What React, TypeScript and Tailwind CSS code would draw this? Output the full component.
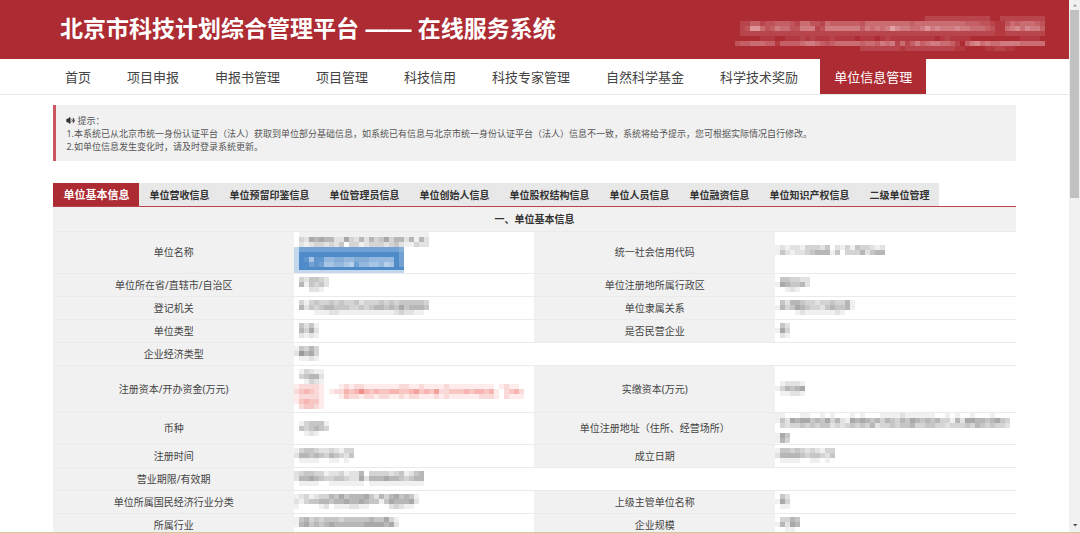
import { Volume2 } from "lucide-react";
import clsx from "clsx";

const CELL = 5;

const navItems = [
  "首页",
  "项目申报",
  "申报书管理",
  "项目管理",
  "科技信用",
  "科技专家管理",
  "自然科学基金",
  "科学技术奖励",
  "单位信息管理",
];

const tabs = [
  "单位基本信息",
  "单位营收信息",
  "单位预留印鉴信息",
  "单位管理员信息",
  "单位创始人信息",
  "单位股权结构信息",
  "单位人员信息",
  "单位融资信息",
  "单位知识产权信息",
  "二级单位管理",
];

type Field = { label: string; rows: string[] };
type Row = { height: string; left: Field; right?: Field };

// Each digit is the strength of one masked block, 0 is empty.
const rows: Row[] = [
  {
    height: "h-[42px]",
    left: {
      label: "单位名称",
      rows: [
        "011111111111111111111111111",
        "032656552263252534635525152",
        "021233232403312333234211322",
      ],
    },
    right: {
      label: "统一社会信用代码",
      rows: ["1212213332402131433212", "1421223455514033352455", "0000000000000000000000"],
    },
  },
  {
    height: "h-[23px]",
    left: { label: "单位所在省/直辖市/自治区", rows: ["0324432", "0514342", "0002210"] },
    right: { label: "单位注册地所属行政区", rows: ["0443322", "1654452", "0012100"] },
  },
  {
    height: "h-[23px]",
    left: {
      label: "登记机关",
      rows: [
        "031343343433423334343444443",
        "052434554443343455454645554",
        "000011122111111111112322110",
      ],
    },
    right: {
      label: "单位隶属关系",
      rows: ["0425543323343351", "1534654332454451", "0000121111112100"],
    },
  },
  {
    height: "h-[23px]",
    left: { label: "单位类型", rows: ["04241", "05362", "02121"] },
    right: { label: "是否民营企业", rows: ["042", "163", "021"] },
  },
  {
    height: "h-[23px]",
    left: { label: "企业经济类型", rows: ["14353", "27563", "01121"] },
  },
  {
    height: "h-[47px]",
    left: { label: "注册资本/开办资金(万元)", rows: ["013211", "034552", "001321"] },
    right: { label: "实缴资本(万元)", rows: ["012221", "135456", "011221"] },
  },
  {
    height: "h-[32px]",
    left: { label: "币种", rows: ["0134441", "0434543", "0012100"] },
    right: {
      label: "单位注册地址（住所、经营场所）",
      rows: [
        "11000110010100010100011112111111001010010001000",
        "14265664546352165654535435465454533152665545643",
        "03233434344232343435233434453344332333435434332",
        "00000000000000000000000000000000000000000000000",
        "16400000000000000000000000000000000000000000000",
        "15300000000000000000000000000000000000000000000",
      ],
    },
  },
  {
    height: "h-[23px]",
    left: { label: "注册时间", rows: ["134432232133", "255454354324", "011110011010"] },
    right: { label: "成立日期", rows: ["144343232133", "255554344324", "011110011010"] },
  },
  {
    height: "h-[23px]",
    left: {
      label: "营业期限/有效期",
      rows: ["23443312231225033332341245", "25565433443226255565543455", "01111001111111011111111111"],
    },
  },
  {
    height: "h-[23px]",
    left: {
      label: "单位所属国民经济行业分类",
      rows: ["1231233546455564253564541", "2134455455655654414655562", "1000012011122110000232110"],
    },
    right: { label: "上级主管单位名称", rows: ["042", "163", "011"] },
  },
  {
    height: "h-[23px]",
    left: {
      label: "所属行业",
      rows: ["145343444344444544631", "156454565555556666562", "000000000000000000000"],
    },
    right: { label: "企业规模", rows: ["03354", "15265", "00110"] },
  },
];

const capitalNotice = [
  "1222210001212211111112211211112111111111012110",
  "2343210122434643433443345343522333434434102342",
  "1222210001322122122112122111212111111222102111",
  "1343310000000000000000000000000000000000000000",
  "0233210000000000000000000000000000000000000000",
];

const maskedName = [
  "222222222222222222223",
  "000000000000000000002",
  "015114433443334444402",
  "002125544562445546502",
];

const userInfo = [
  "00000000000000000000000000000000000000222222222222200222222222",
  "02244233444325533254444443555555555455555555554443321135455543",
  "02388534655336662366666664656569766556867666766555431156757664",
  "02222222222222222222222222222222222222222222222222221122222222",
  "00000111001112121112111101110121111111110121111000000000011110",
  "34455544144445665434555554554656252464566554204675655666655555",
  "00000000000000000000000002222222212222222222110000112211000000",
];

function Mosaic({ rows, color = "#707070" }: { rows: string[]; color?: string }) {
  const width = rows[0].length * CELL;
  const height = rows.length * CELL;

  return (
    <svg
      className="block shrink-0"
      width={width}
      height={height}
      viewBox={`0 0 ${width} ${height}`}
      fill={color}
      shapeRendering="crispEdges"
      aria-hidden="true"
    >
      {rows.map((row, y) =>
        row.split("").map((level, x) =>
          level === "0" ? null : (
            <rect
              key={`${x}-${y}`}
              x={x * CELL}
              y={y * CELL}
              width={CELL}
              height={CELL}
              opacity={Number(level) / 10}
            />
          ),
        ),
      )}
    </svg>
  );
}

function Header() {
  return (
    <header className="flex h-[59px] items-center justify-between bg-[#ad2b33] pr-6 pl-[60px]">
      <h1 className="font-['Liberation_Sans','Noto_Sans_CJK_SC',sans-serif] text-[23px] font-bold whitespace-nowrap text-white">
        北京市科技计划综合管理平台 —— 在线服务系统
      </h1>
      <div className="pt-2">
        <Mosaic rows={userInfo} color="#e8b0b4" />
      </div>
    </header>
  );
}

function Nav() {
  return (
    <nav className="flex h-9 gap-2 border-b border-[#e8e8e8] px-[51px]">
      {navItems.map((item) => (
        <a
          key={item}
          href="#"
          className={clsx(
            "flex items-center px-3.5 pt-0.5 text-[13px] whitespace-nowrap",
            item === "单位信息管理" ? "bg-[#ad2b33] text-white" : "text-[#444]",
          )}
        >
          {item}
        </a>
      ))}
    </nav>
  );
}

function Notice() {
  return (
    <section className="mt-2.5 border-l-3 border-[#cb5761] bg-[#f1f1f1] pt-[9px] pb-2 pl-2.5 text-[9px] leading-[13px] text-[#555]">
      <p className="flex items-center gap-0.5">
        <Volume2 className="size-[9px] fill-[#333] text-[#333]" strokeWidth={2} />
        提示：
      </p>
      <p>
        1.本系统已从北京市统一身份认证平台（法人）获取到单位部分基础信息，如系统已有信息与北京市统一身份认证平台（法人）信息不一致，系统将给予提示，您可根据实际情况自行修改。
      </p>
      <p>2.如单位信息发生变化时，请及时登录系统更新。</p>
    </section>
  );
}

function Tabs() {
  return (
    <div role="tablist" className="mt-[22px] flex h-6 border-b border-[#b8434b]">
      {tabs.map((tab, i) => (
        <button
          key={tab}
          type="button"
          role="tab"
          aria-selected={i === 0}
          className={clsx(
            "px-2.5 pt-0.5 font-bold whitespace-nowrap",
            i === 0 ? "bg-[#ad2b33] text-[11px] text-white" : "bg-[#e8e8e8] text-[10px] text-[#333]",
          )}
        >
          {tab}
        </button>
      ))}
    </div>
  );
}

function Value({ field }: { field: Field }) {
  if (field.label === "单位名称") {
    return (
      <>
        <Mosaic rows={field.rows} />
        <button
          type="button"
          aria-label="单位名称"
          className="flex h-[26px] items-start border-b-3 border-l-5 border-[#c3d8ed] bg-[#4f8bc8]"
        >
          <Mosaic color="#ffffff" rows={maskedName} />
        </button>
      </>
    );
  }

  return (
    <>
      <Mosaic rows={field.rows} />
      {field.label.startsWith("注册资本") && <Mosaic rows={capitalNotice} color="#e8453c" />}
    </>
  );
}

function InfoTable() {
  return (
    <table className="w-full table-fixed border-collapse text-[10px] leading-3 text-[#444]">
      <thead>
        <tr className="h-6 border-b border-[#ebebeb] bg-[#f1f1f1]">
          <th colSpan={4} className="p-0 font-bold text-[#333]">
            一、单位基本信息
          </th>
        </tr>
      </thead>
      <tbody>
        {rows.map(({ height, left, right }) => (
          <tr key={left.label} className={clsx("border-b border-[#ebebeb]", height)}>
            <th scope="row" className="bg-[#f1f1f1] p-0 font-normal">
              {left.label}
            </th>
            <td colSpan={right ? 1 : 3} className="p-0">
              <Value field={left} />
            </td>
            {right && (
              <>
                <th scope="row" className="bg-[#f1f1f1] p-0 font-normal">
                  {right.label}
                </th>
                <td className="p-0">
                  <Value field={right} />
                </td>
              </>
            )}
          </tr>
        ))}
      </tbody>
    </table>
  );
}

function Scrollbar() {
  return (
    <div className="flex w-[11px] shrink-0 flex-col items-center bg-[#f1f1f1]">
      <svg className="h-2.5 w-2 shrink-0" viewBox="0 0 8 10" fill="#a0a0a0" aria-hidden="true">
        <path d="M2 6.5 4 4l2 2.5z" />
      </svg>
      <div className="h-[188px] w-[9px] bg-[#c1c1c1]" />
      <svg className="mt-auto h-3.5 w-2 shrink-0" viewBox="0 0 8 14" fill="#505050" aria-hidden="true">
        <path d="M2 6h4.500L4.200 8.500z" />
      </svg>
    </div>
  );
}

export default function App() {
  return (
    <div className="flex h-screen flex-col bg-white font-['Noto_Sans','Noto_Sans_CJK_SC',sans-serif]">
      <div className="flex min-h-0 flex-1">
        <div className="min-w-0 flex-1 overflow-hidden">
          <Header />
          <Nav />
          <main className="mx-auto w-[90%]">
            <Notice />
            <Tabs />
            <InfoTable />
          </main>
        </div>
        <Scrollbar />
      </div>
      <div className="h-px shrink-0 bg-[#cccd98]" />
    </div>
  );
}
